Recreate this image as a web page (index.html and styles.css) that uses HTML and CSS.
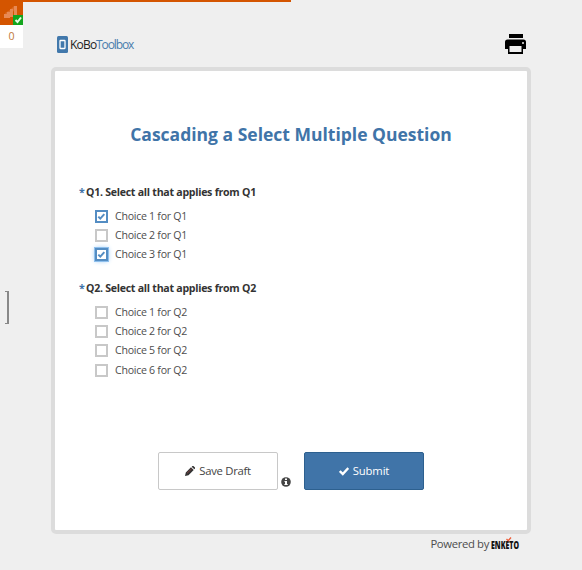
FILE: index.html
```html
<!DOCTYPE html>
<html lang="en">
<head>
<meta charset="utf-8">
<title>Cascading a Select Multiple Question</title>
<link rel="stylesheet" href="styles.css">
</head>
<body>
<div class="progress"></div>
<aside class="status">
  <div class="signal">
    <svg width="23" height="25" viewBox="0 0 23 25"><g fill="#e88a55"><path d="M4 14h3v4H4zM7 12h3v6H7zM10 9h3v8h-3zM14 6h3v9h-3z"/><path d="M5 13l5-3 4-4 3 1-5 6-6 2z" opacity=".45"/></g><path fill="#14a51e" d="M13 15h10v10H13z"/><path d="M15.500 20l2 2 3.500-4.500" fill="none" stroke="#e6ffe6" stroke-width="2"/></svg>
  </div>
  <div class="queue">0</div>
</aside>
<div class="side-handle"></div>
<main class="page">
  <header class="header">
    <div class="logo">
      <svg width="11" height="17" viewBox="0 0 11 17"><rect width="11" height="17" rx="1.500" fill="#4178ab"/><rect x="3" y="4.500" width="5" height="8" rx=".5" fill="none" stroke="#fff" stroke-width="1.300"/></svg>
      <span class="kobo">KoBo</span><span class="toolbox">Toolbox</span>
    </div>
    <svg class="print" width="21" height="20" viewBox="0 0 21 20"><path d="M4 0h14v4H4zM2.500 5.500h16A2.500 2.500 0 0 1 21 8v7h-3v5H3v-5H0V8a2.500 2.500 0 0 1 2.500-2.500z"/><path d="M4.500 12h12v6h-12z" fill="#efefef"/><circle cx="18" cy="9" r="1" fill="#efefef"/></svg>
  </header>
  <form class="card">
    <h1>Cascading a Select Multiple Question</h1>
    <fieldset class="question compact">
      <div class="label"><span class="star">*</span>Q1. Select all that applies from Q1</div>
      <div class="option"><span class="box checked"><svg viewBox="0 0 9 9"><path d="M1.300 4.600l2 2 4-4.500"/></svg></span>Choice 1 for Q1</div>
      <div class="option"><span class="box"></span>Choice 2 for Q1</div>
      <div class="option"><span class="box checked focused"><svg viewBox="0 0 9 9"><path d="M1.300 4.600l2 2 4-4.500"/></svg></span>Choice 3 for Q1</div>
    </fieldset>
    <fieldset class="question">
      <div class="label"><span class="star">*</span>Q2. Select all that applies from Q2</div>
      <div class="option"><span class="box"></span>Choice 1 for Q2</div>
      <div class="option"><span class="box"></span>Choice 2 for Q2</div>
      <div class="option"><span class="box"></span>Choice 5 for Q2</div>
      <div class="option"><span class="box"></span>Choice 6 for Q2</div>
    </fieldset>
    <div class="actions">
      <button type="button" class="btn"><svg width="10" height="10" viewBox="0 0 10 10"><path fill="#333" d="M0 10l.8-3.500L6 1.300 8.700 4 3.500 9.200zM6.700.7L7.400 0h1L10 1.600v1l-.7.700z"/><path d="M2 7.300l4.700-4.500" stroke="#a34848" stroke-width=".7"/></svg>Save Draft</button>
      <svg class="info" width="10" height="10" viewBox="0 0 10 10"><circle cx="5" cy="5" r="4.800" fill="#444"/><path fill="#fff" d="M4 1.500h2V3H4zM3.500 4H6v3h.7v1H3.400V7H4V5h-.5z"/></svg>
      <button type="button" class="btn primary"><svg width="10" height="10" viewBox="0 0 10 10"><path d="M.8 5l3 3L9.300 2" fill="none" stroke="#fff" stroke-width="2.400"/></svg>Submit</button>
    </div>
  </form>
  <footer class="footer"><span class="powered">Powered by</span><span class="brand"><span class="brand-name">ENKETO</span><svg width="6" height="5" viewBox="0 0 6 5"><path d="M.5 2l1.700 1.700L5 .5" fill="none" stroke="#ed5a35" stroke-width="1.300"/></svg></span></footer>
</main>
</body>
</html>
```
FILE: styles.css
```css
* { box-sizing: border-box; }
body {
  margin: 0;
  height: 570px;
  overflow: hidden;
  background: #efefef;
  color: #4d4d4d;
  font: 10.600px/19.250px "Open Sans", sans-serif;
}
svg { display: block; flex: none; }
.progress { position: absolute; top: 0; left: 0; width: 291px; height: 2px; background: #d45500; }
.status { position: absolute; top: 0; left: 0; width: 23px; }
.signal { height: 25px; background: #d45500; }
.queue { height: 23px; background: #fff; color: #c07838; line-height: 22px; text-align: center; }
.side-handle {
  position: absolute;
  left: 5px;
  top: 291px;
  width: 4px;
  height: 33px;
  border: 1px solid #888;
  border-right-width: 2px;
  border-left: 0;
}
.page { width: 480px; margin-left: 51px; }
.header { height: 67px; padding: 34px 5px 0 6px; display: flex; justify-content: space-between; }
.logo { display: flex; height: 17px; margin-top: 2px; font-size: 12px; line-height: 17px; }
.kobo { width: 26px; margin-left: 2px; color: #222; letter-spacing: -.8px; white-space: nowrap; }
.toolbox { color: #4a7dad; letter-spacing: -1.100px; white-space: nowrap; }
.card {
  height: 467px;
  padding: 49px 24px 0;
  border: 4px solid #dcdcdc;
  border-radius: 5px;
  background: #fff;
}
h1 { margin: 0 0 36px; color: #4074a8; font-size: 17.500px; line-height: 28px; text-align: center; }
.question { margin: 0 0 15px; padding: 0; border: 0; }
.label { height: 23px; color: #333; font-weight: 700; line-height: 17px; letter-spacing: -.3px; word-spacing: .2px; white-space: nowrap; }
.star { display: inline-block; width: 7px; color: #4074a8; }
.option { display: flex; align-items: center; height: 19.250px; padding-left: 16px; letter-spacing: -.27px; }
.compact { margin-bottom: 15.750px; }
.compact .option { height: 19px; }
.box { width: 13px; height: 13px; margin-right: 7px; border: 2px solid #c8c8c8; background: #fff; }
.checked { border-color: #548dc3; }
.checked path { fill: none; stroke: #548dc3; stroke-width: 2; }
.focused { box-shadow: 0 0 0 1px #8fc0ed, 0 0 5px #8fc4f5; }
.actions { display: flex; margin: 72px 0 0 79px; }
.btn {
  display: flex;
  align-items: center;
  justify-content: center;
  gap: 4px;
  width: 120px;
  height: 38px;
  padding: 0;
  border: 1px solid #c8c8c8;
  border-radius: 2px;
  background: #fff;
  color: #444;
  font: 11.300px "Open Sans", sans-serif;
  letter-spacing: -.3px;
}
.primary { border-color: #2d608f; background: #4074a8; color: #fff; letter-spacing: -.15px; }
.info { margin: 25px 13px 0 3px; }
.footer { display: flex; justify-content: flex-end; gap: 2px; height: 20px; padding-right: 10px; }
.powered { font-size: 11.300px; letter-spacing: -.35px; }
.brand { position: relative; width: 30px; }
.brand-name {
  display: inline-block;
  color: #111;
  font: 800 10px/22px "Open Sans", sans-serif;
  transform: scaleX(.7);
  transform-origin: left;
}
.brand svg { position: absolute; left: 15px; top: 3px; }
```
